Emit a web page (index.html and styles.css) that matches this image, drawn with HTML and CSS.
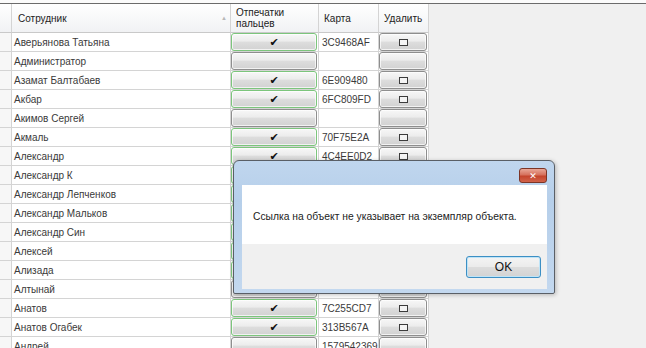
FILE: index.html
```html
<!DOCTYPE html>
<html lang="ru">
<head>
  <meta charset="UTF-8">
  <title>Сотрудники</title>
  <link rel="stylesheet" href="styles.css">
</head>
<body>
  <div class="topbar"></div>

  <div class="grid">
    <div class="row header">
      <div class="cell rowhead"></div>
      <div class="cell col-name">Сотрудник<span class="sort">&#9650;</span></div>
      <div class="cell col-finger">Отпечатки<br>пальцев</div>
      <div class="cell col-card">Карта</div>
      <div class="cell col-del">Удалить</div>
    </div>

    <div class="row">
      <div class="cell rowhead"></div>
      <div class="cell col-name">Аверьянова Татьяна</div>
      <div class="cell col-finger"><button class="btn done">&#10004;</button></div>
      <div class="cell col-card">3C9468AF</div>
      <div class="cell col-del"><button class="btn"><span class="box"></span></button></div>
    </div>
    <div class="row">
      <div class="cell rowhead"></div>
      <div class="cell col-name">Администратор</div>
      <div class="cell col-finger"><button class="btn"></button></div>
      <div class="cell col-card"></div>
      <div class="cell col-del"><button class="btn"></button></div>
    </div>
    <div class="row">
      <div class="cell rowhead"></div>
      <div class="cell col-name">Азамат Балтабаев</div>
      <div class="cell col-finger"><button class="btn done">&#10004;</button></div>
      <div class="cell col-card">6E909480</div>
      <div class="cell col-del"><button class="btn"><span class="box"></span></button></div>
    </div>
    <div class="row">
      <div class="cell rowhead"></div>
      <div class="cell col-name">Акбар</div>
      <div class="cell col-finger"><button class="btn done">&#10004;</button></div>
      <div class="cell col-card">6FC809FD</div>
      <div class="cell col-del"><button class="btn"><span class="box"></span></button></div>
    </div>
    <div class="row">
      <div class="cell rowhead"></div>
      <div class="cell col-name">Акимов Сергей</div>
      <div class="cell col-finger"><button class="btn"></button></div>
      <div class="cell col-card"></div>
      <div class="cell col-del"><button class="btn"></button></div>
    </div>
    <div class="row">
      <div class="cell rowhead"></div>
      <div class="cell col-name">Акмаль</div>
      <div class="cell col-finger"><button class="btn done">&#10004;</button></div>
      <div class="cell col-card">70F75E2A</div>
      <div class="cell col-del"><button class="btn"><span class="box"></span></button></div>
    </div>
    <div class="row">
      <div class="cell rowhead"></div>
      <div class="cell col-name">Александр</div>
      <div class="cell col-finger"><button class="btn done">&#10004;</button></div>
      <div class="cell col-card">4C4EE0D2</div>
      <div class="cell col-del"><button class="btn"><span class="box"></span></button></div>
    </div>
    <div class="row">
      <div class="cell rowhead"></div>
      <div class="cell col-name">Александр К</div>
      <div class="cell col-finger"><button class="btn done"></button></div>
      <div class="cell col-card"></div>
      <div class="cell col-del"><button class="btn"></button></div>
    </div>
    <div class="row">
      <div class="cell rowhead"></div>
      <div class="cell col-name">Александр Лепченков</div>
      <div class="cell col-finger"><button class="btn done"></button></div>
      <div class="cell col-card"></div>
      <div class="cell col-del"><button class="btn"></button></div>
    </div>
    <div class="row">
      <div class="cell rowhead"></div>
      <div class="cell col-name">Александр Мальков</div>
      <div class="cell col-finger"><button class="btn done"></button></div>
      <div class="cell col-card"></div>
      <div class="cell col-del"><button class="btn"></button></div>
    </div>
    <div class="row">
      <div class="cell rowhead"></div>
      <div class="cell col-name">Александр Син</div>
      <div class="cell col-finger"><button class="btn done"></button></div>
      <div class="cell col-card"></div>
      <div class="cell col-del"><button class="btn"></button></div>
    </div>
    <div class="row">
      <div class="cell rowhead"></div>
      <div class="cell col-name">Алексей</div>
      <div class="cell col-finger"><button class="btn done"></button></div>
      <div class="cell col-card"></div>
      <div class="cell col-del"><button class="btn"></button></div>
    </div>
    <div class="row">
      <div class="cell rowhead"></div>
      <div class="cell col-name">Ализада</div>
      <div class="cell col-finger"><button class="btn done"></button></div>
      <div class="cell col-card"></div>
      <div class="cell col-del"><button class="btn"></button></div>
    </div>
    <div class="row">
      <div class="cell rowhead"></div>
      <div class="cell col-name">Алтынай</div>
      <div class="cell col-finger"><button class="btn"></button></div>
      <div class="cell col-card"></div>
      <div class="cell col-del"><button class="btn"></button></div>
    </div>
    <div class="row">
      <div class="cell rowhead"></div>
      <div class="cell col-name">Анатов</div>
      <div class="cell col-finger"><button class="btn done">&#10004;</button></div>
      <div class="cell col-card">7C255CD7</div>
      <div class="cell col-del"><button class="btn"><span class="box"></span></button></div>
    </div>
    <div class="row">
      <div class="cell rowhead"></div>
      <div class="cell col-name">Анатов Огабек</div>
      <div class="cell col-finger"><button class="btn done">&#10004;</button></div>
      <div class="cell col-card">313B567A</div>
      <div class="cell col-del"><button class="btn"><span class="box"></span></button></div>
    </div>
    <div class="row">
      <div class="cell rowhead"></div>
      <div class="cell col-name">Андрей</div>
      <div class="cell col-finger"><button class="btn"></button></div>
      <div class="cell col-card">1579542369</div>
      <div class="cell col-del"><button class="btn"></button></div>
    </div>
  </div>

  <div class="dialog">
    <div class="dialog-title">
      <button class="close">&#10005;</button>
    </div>
    <div class="dialog-body">
      <p class="message">Ссылка на объект не указывает на экземпляр объекта.</p>
    </div>
    <div class="dialog-footer">
      <button class="ok">OK</button>
    </div>
  </div>
</body>
</html>
```

FILE: styles.css
```css
:root {
  --back: #f0f0f0;
  --line: #d4d4d4;
  --text: #1e1e1e;
  --btn-border: #8e8e8e;
  --btn-done: #7cc57c;
}

* {
  margin: 0;
  padding: 0;
  box-sizing: border-box;
}

body {
  width: 646px;
  height: 348px;
  overflow: hidden;
  background-color: var(--back);
  color: var(--text);
  font-family: 'Liberation Sans', Arial, sans-serif;
  font-size: 10px;
  position: relative;
}

.topbar {
  height: 4px;
  background-color: #fbfbfb;
  border-bottom: 1px solid #6b6b6b;
}

.grid {
  display: flex;
  flex-direction: column;
  width: 430px;
}

.row {
  display: grid;
  grid-template-columns: 12px 219px 88px 60px 50px;
  height: 19px;
}

.cell {
  background-color: #ffffff;
  border-right: 1px solid var(--line);
  border-bottom: 1px solid var(--line);
  display: flex;
  align-items: center;
  padding: 1px 0 0 2px;
  white-space: nowrap;
  overflow: hidden;
  color: #3a3a3a;
}

.rowhead {
  background-color: #f7f7f7;
  padding: 0;
}

.col-finger,
.col-del {
  padding: 0 1px 0 0;
}

.col-card {
  padding-left: 3px;
}

.header {
  height: 29px;
}

.header .cell {
  background: linear-gradient(#ffffff, #f1f2f4);
  border-bottom: 1px solid #c9c9c9;
  color: #222;
  padding-left: 6px;
}

.header .col-name {
  position: relative;
}

.header .col-finger {
  padding-left: 5px;
  line-height: 11px;
}

.header .col-card {
  padding-left: 5px;
}

.header .col-del {
  padding-left: 5px;
}

.sort {
  position: absolute;
  right: 3px;
  top: 11px;
  font-size: 6px;
  color: #b8b8b8;
}

.btn {
  width: 100%;
  height: 18px;
  border: 1px solid var(--btn-border);
  border-radius: 3px;
  background: linear-gradient(#f7f7f7 0%, #ececec 45%, #dddddd 50%, #d2d2d2 100%);
  box-shadow: inset 0 0 0 1px rgba(255, 255, 255, 0.7);
  font-family: 'DejaVu Sans', sans-serif;
  font-size: 11px;
  color: #111;
  display: flex;
  align-items: center;
  justify-content: center;
}

.btn.done {
  border-color: var(--btn-done);
}

.box {
  width: 9px;
  height: 7px;
  border: 1px solid #3c3c3c;
  background-color: #f4f4f4;
}

.dialog {
  position: absolute;
  left: 233px;
  top: 160px;
  width: 322px;
  height: 134px;
  border: 1px solid #5a5f66;
  border-radius: 6px 6px 2px 2px;
  background: linear-gradient(#c0d6ee, #b6cfea 30%, #c3d8ef);
  padding: 0 7px 4px 8px;
  display: flex;
  flex-direction: column;
  box-shadow: 1px 1px 4px rgba(0, 0, 0, 0.25);
}

.dialog-title {
  height: 24px;
  display: flex;
  justify-content: flex-end;
  align-items: flex-start;
  padding-top: 8px;
}

.close {
  width: 28px;
  height: 15px;
  border: 1px solid #7d3526;
  border-radius: 3px;
  background: linear-gradient(#e9a797, #d6715d 45%, #c5452d 55%, #d1634a);
  color: #ffffff;
  font-family: 'DejaVu Sans', sans-serif;
  font-size: 9px;
  font-weight: bold;
  margin-top: -1px;
}

.dialog-body {
  height: 59px;
  background-color: #ffffff;
  display: flex;
  align-items: center;
  padding-left: 11px;
}

.message {
  font-family: 'Liberation Sans', Arial, sans-serif;
  font-size: 10.3px;
  white-space: nowrap;
  color: #222;
  margin-top: 3px;
}

.dialog-footer {
  flex: 1;
  background-color: #f0f0f0;
  display: flex;
  justify-content: flex-end;
  align-items: flex-start;
  padding: 12px 6px 0 0;
}

.ok {
  width: 75px;
  height: 22px;
  border: 1px solid #3c8fc4;
  border-radius: 3px;
  background: linear-gradient(#f4f4f4, #ebebeb 48%, #dcdcdc 52%, #d3d3d3);
  box-shadow: inset 0 0 0 1px #bfe4f7;
  font-family: 'Liberation Sans', Arial, sans-serif;
  font-size: 12px;
  color: #111;
}
```
